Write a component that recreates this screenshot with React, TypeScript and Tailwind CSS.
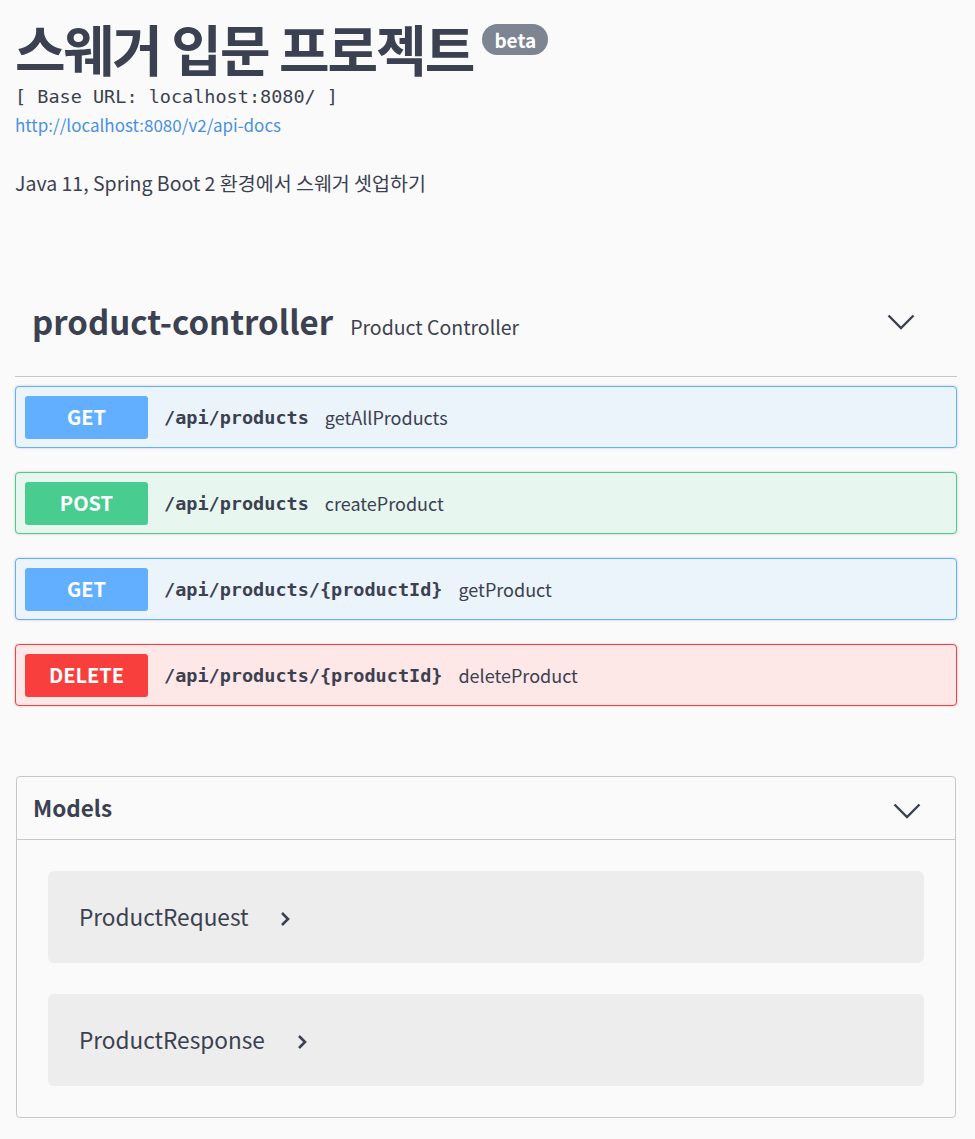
import React from 'react';

const sans = { fontFamily: '"Noto Sans CJK KR", "Noto Sans", sans-serif' };
const mono = { fontFamily: '"DejaVu Sans Mono", "Liberation Mono", monospace' };

type Op = { method: 'GET' | 'POST' | 'DELETE'; path: string; summary: string };

const OPS: Op[] = [
  { method: 'GET', path: '/api/products', summary: 'getAllProducts' },
  { method: 'POST', path: '/api/products', summary: 'createProduct' },
  { method: 'GET', path: '/api/products/{productId}', summary: 'getProduct' },
  { method: 'DELETE', path: '/api/products/{productId}', summary: 'deleteProduct' },
];

const STYLES = {
  GET: { block: 'bg-[#ebf3fb] border-[#61affe]', badge: 'bg-[#61affe]' },
  POST: { block: 'bg-[#e8f6f0] border-[#49cc90]', badge: 'bg-[#49cc90]' },
  DELETE: { block: 'bg-[#fee7e7] border-[#f93e3e]', badge: 'bg-[#f93e3e]' },
};

const ChevronDown = () => (
  <svg width="28" height="16" viewBox="0 0 28 16" fill="none">
    <polyline points="1.5,1.5 14,14 26.5,1.5" stroke="#3b4151" strokeWidth="2.4" />
  </svg>
);

const ChevronRight = () => (
  <svg width="10" height="16" viewBox="0 0 10 16" fill="none">
    <polyline points="2,2 8,8 2,14" stroke="#3b4151" strokeWidth="2.6" />
  </svg>
);

const OpBlock: React.FC<{ op: Op }> = ({ op }) => {
  const s = STYLES[op.method];
  return (
    <div className={`h-[62px] flex items-center border rounded-[4px] px-[9px] shadow-[0_0_3px_rgba(0,0,0,0.19)] ${s.block}`}>
      <div className={`w-[123px] h-[43px] rounded-[3px] flex items-center justify-center text-white font-bold text-[20px] ${s.badge}`}>
        {op.method}
      </div>
      <span className="ml-4 mt-[2px] font-bold text-[18.5px] text-[#3b4151]" style={mono}>{op.path}</span>
      <span className="ml-4 text-[18px] text-[#3b4151]">{op.summary}</span>
    </div>
  );
};

const ModelRow: React.FC<{ name: string }> = ({ name }) => (
  <div className="h-[92px] bg-[#ededed] rounded-[6px] flex items-center pl-[31px]">
    <span className="text-[22.6px] text-[#3b4151]">{name}</span>
    <span className="ml-[32px] mt-[4px]"><ChevronRight /></span>
  </div>
);

export default function App() {
  return (
    <div className="min-h-screen bg-[#fafafa] text-[#3b4151]" style={sans}>
      <div className="pl-[15px] pr-[18px] pt-[14px]">
        <div className="flex items-start">
          <h1 className="text-[55px] font-bold leading-[66px] tracking-[-2px]">스웨거 입문 프로젝트</h1>
          <span className="ml-[9px] mt-[10px] h-[31px] px-[12px] rounded-full bg-[#7d8492] text-white font-bold text-[19px] leading-[31px]">beta</span>
        </div>
        <div className="text-[18.5px] leading-[24px] mt-[5px]" style={mono}>[ Base URL: localhost:8080/ ]</div>
        <a className="block text-[17px] leading-[24px] mt-[4px] text-[#4990e2]">http://localhost:8080/v2/api-docs</a>
        <p className="mt-[32px] text-[19.5px] leading-[28px]">Java 11, Spring Boot 2 환경에서 스웨거 셋업하기</p>

        <div className="mt-[84px] flex items-center justify-between pl-[17px] pr-[42px] h-[96px] border-b border-[#c8c8c8]">
          <div className="flex items-baseline pb-[14px]">
            <span className="text-[33px] font-bold">product-controller</span>
            <span className="ml-[17px] text-[19.5px]">Product Controller</span>
          </div>
          <div className="pb-[14px]"><ChevronDown /></div>
        </div>

        <div className="mt-[9px] flex flex-col gap-[24px]">
          {OPS.map((op, i) => (
            <OpBlock key={i} op={op} />
          ))}
        </div>

        <div className="mt-[70px] mx-[1px] mb-[20px] border border-[#c8c8c8] rounded-[4px]">
          <div className="h-[63px] flex items-center justify-between pl-[16px] pr-[34px] border-b border-[#c8c8c8]">
            <span className="text-[22.5px] font-semibold">Models</span>
            <div className="mt-[6px]"><ChevronDown /></div>
          </div>
          <div className="px-[31px] py-[31px] flex flex-col gap-[31px]">
            <ModelRow name="ProductRequest" />
            <ModelRow name="ProductResponse" />
          </div>
        </div>
      </div>
    </div>
  );
}
